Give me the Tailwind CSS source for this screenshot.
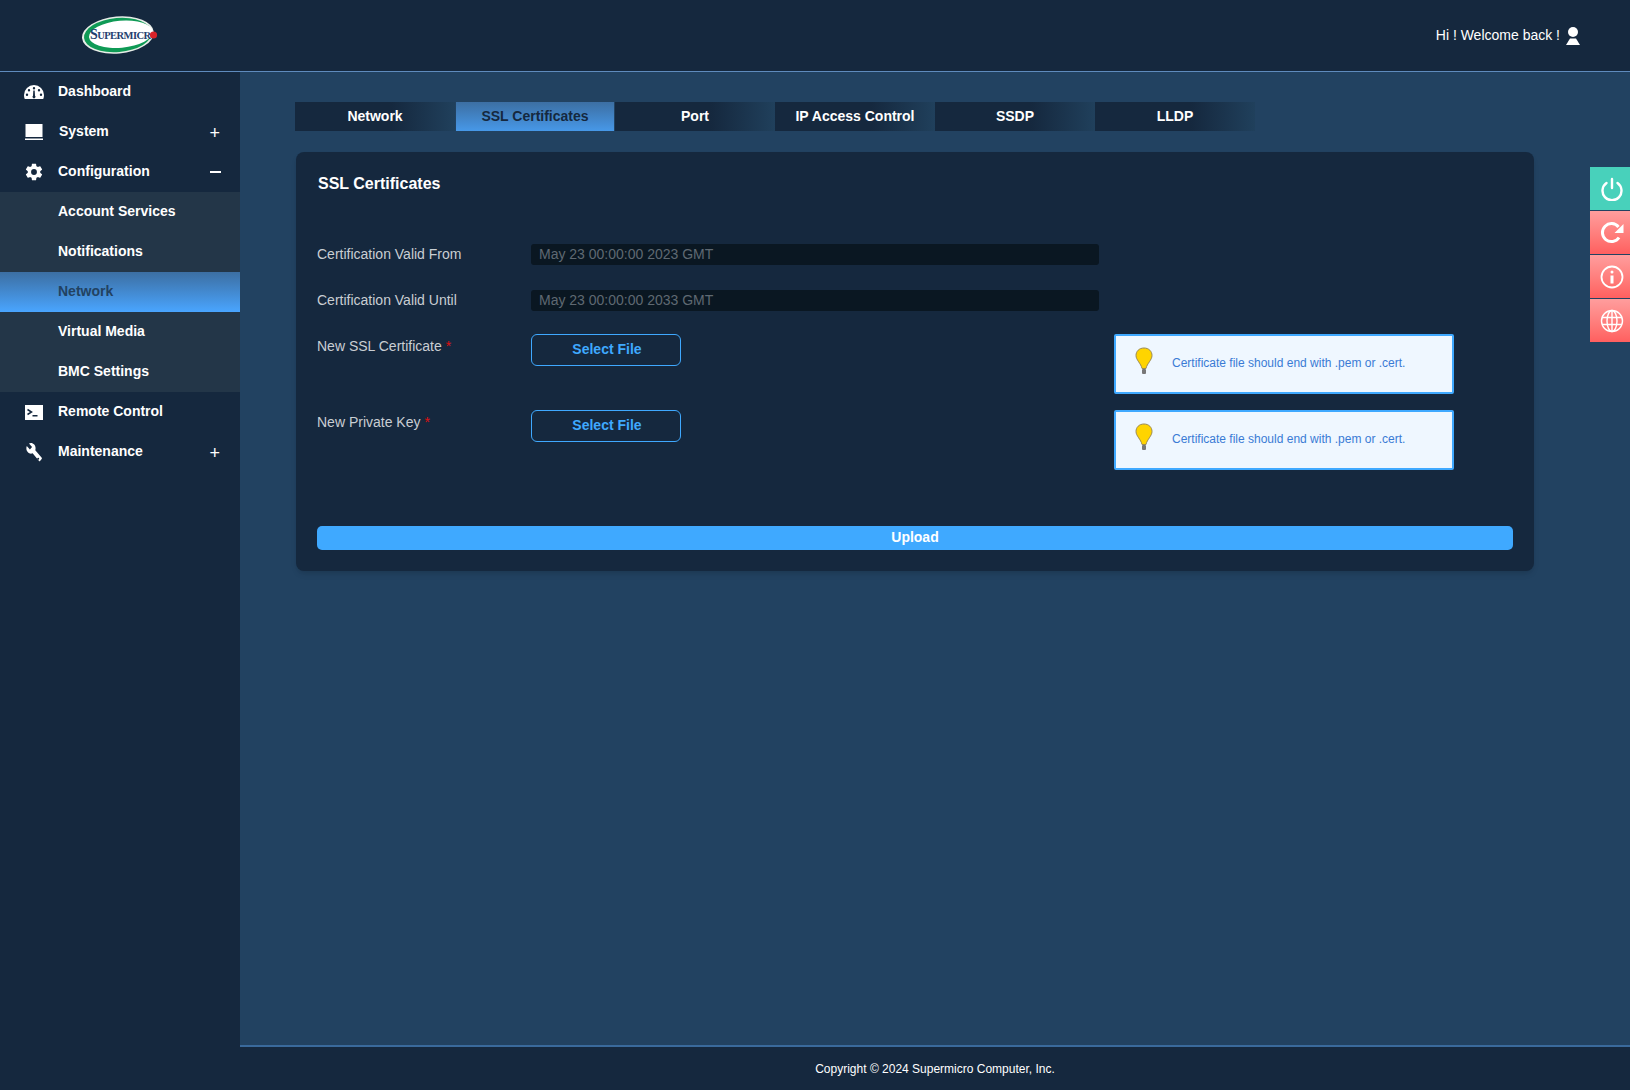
<!DOCTYPE html>
<html>

<head>
    <title>SSL Certificates</title>
    <script src="https://cdn.jsdelivr.net/npm/@tailwindcss/browser@4"></script>
</head>

<body class="h-[1090px] w-[1630px] overflow-hidden bg-[#224261] font-['Liberation_Sans',Arial,sans-serif] text-white">
    <header class="flex h-[72px] items-center justify-between border-b border-[#5f8bbd] bg-[#15283e] pr-[50px]">
        <svg class="ml-[80px] mt-[1px] h-[42px] w-[80px]" viewBox="0 0 80 42">
            <g transform="rotate(-5 38 21)">
                <ellipse cx="38" cy="20" rx="36" ry="18.500" fill="#e8eee8"></ellipse>
                <ellipse cx="38" cy="20" rx="34" ry="17" fill="#0f9a55"></ellipse>
                <ellipse cx="41" cy="19.500" rx="32" ry="13.500" fill="#ffffff"></ellipse>
            </g>
            <text x="10" y="24" font-family="Liberation Serif" font-size="14" font-weight="bold" fill="#24406f" textLength="61">S<tspan font-size="10.500">UPERMICR</tspan></text>
            <circle cx="73.500" cy="20" r="3.600" fill="#d8232a"></circle>
        </svg>
        <div class="flex items-center text-sm">
            <span class="mb-[2px]">Hi ! Welcome back !</span>
            <svg class="ml-[6px] h-[18px] w-[14px]" viewBox="0 0 14 18" fill="#ffffff">
                <circle cx="7" cy="5" r="5"></circle>
                <path d="M4 11.500h6L14 18H0z"></path>
            </svg>
        </div>
    </header>

    <div class="flex h-[1018px]">
        <aside class="w-[240px] shrink-0 bg-[#15283e] text-sm font-bold">
            <a class="flex h-10 items-center pl-6">
                <svg class="mr-[14px] h-5 w-5" viewBox="0 0 20 20" fill="#ffffff">
                    <path fill-rule="evenodd" d="M10 3a10 10 0 0 0-10 10c0 1.500.3 3 .8 4h18.400c.5-1 .8-2.500.8-4A10 10 0 0 0 10 3zM10 5a1.200 1.200 0 1 1 0 2.400A1.200 1.200 0 0 1 10 5zM5 7a1.200 1.200 0 1 1 0 2.400A1.200 1.200 0 0 1 5 7zM15 7a1.200 1.200 0 1 1 0 2.400A1.200 1.200 0 0 1 15 7zM3 11.500a1.200 1.200 0 1 1 0 2.400 1.200 1.200 0 0 1 0-2.400zM17 11.500a1.200 1.200 0 1 1 0 2.400 1.200 1.200 0 0 1 0-2.400zM9.300 8.500h1.400l.3 5.200a1.500 1.500 0 1 1-2 0z"></path>
                </svg>
                <span class="mb-[2px]">Dashboard</span>
            </a>
            <a class="flex h-10 items-center pl-6">
                <svg class="mr-[15px] h-5 w-5" viewBox="0 0 20 20" fill="#ffffff">
                    <rect x="1.500" y="2" width="17" height="13"></rect>
                    <rect x="1" y="16.500" width="18" height="1.500"></rect>
                </svg>
                <span class="mb-[2px]">System</span>
                <span class="ml-auto mr-5 mt-[2px] text-lg font-normal leading-none">+</span>
            </a>
            <a class="flex h-10 items-center pl-6">
                <svg class="mr-[14px] h-5 w-5" viewBox="0 0 24 24" fill="#ffffff">
                    <path d="M12 15.500A3.500 3.500 0 1 1 12 8.500a3.500 3.500 0 0 1 0 7zm7.430-2.530c.04-.32.07-.64.07-.97s-.03-.66-.07-1l2.110-1.630c.19-.15.24-.42.12-.64l-2-3.460c-.12-.22-.39-.31-.61-.22l-2.490 1c-.52-.39-1.060-.73-1.690-.98l-.37-2.650A.506.506 0 0 0 14 2h-4c-.25 0-.46.180-.5.420l-.37 2.650c-.63.250-1.170.590-1.690.980l-2.490-1c-.22-.090-.49 0-.61.220l-2 3.460c-.13.220-.07.490.12.640L4.570 11c-.04.340-.07.670-.07 1s.03.650.07.970l-2.110 1.660c-.19.150-.25.420-.12.640l2 3.460c.12.220.39.300.61.220l2.490-1.010c.52.400 1.060.740 1.690.990l.37 2.650c.04.240.25.420.5.420h4c.25 0 .46-.180.5-.420l.37-2.650c.63-.260 1.170-.590 1.690-.990l2.490 1.010c.22.080.49 0 .61-.220l2-3.460c.12-.220.07-.490-.12-.640l-2.110-1.660z"></path>
                </svg>
                <span class="mb-[2px]">Configuration</span>
                <span class="ml-auto mr-[19px] h-[1.500px] w-[11px] bg-white"></span>
            </a>
            <div class="bg-[#233648]">
                <a class="flex h-10 items-center pb-[2px] pl-[58px]">Account Services</a>
                <a class="flex h-10 items-center pb-[2px] pl-[58px]">Notifications</a>
                <a class="flex h-10 items-center bg-gradient-to-b from-[#3c6fa3] to-[#49a5ff] pb-[2px] pl-[58px] text-[#224261]">Network</a>
                <a class="flex h-10 items-center pb-[2px] pl-[58px]">Virtual Media</a>
                <a class="flex h-10 items-center pb-[2px] pl-[58px]">BMC Settings</a>
            </div>
            <a class="flex h-10 items-center pl-6">
                <svg class="mr-[14px] h-5 w-5" viewBox="0 0 20 20">
                    <rect x="1" y="3" width="18" height="15" fill="#ffffff"></rect>
                    <path d="M3.500 7.500l4 2.500-4 2.500" fill="none" stroke="#15283e" stroke-width="1.500"></path>
                    <rect x="8.500" y="13" width="5" height="1.500" fill="#15283e"></rect>
                </svg>
                <span class="mb-[2px]">Remote Control</span>
            </a>
            <a class="flex h-10 items-center pl-6">
                <svg class="mr-[14px] h-5 w-5" viewBox="0 0 24 24">
                    <path d="M22.700 19l-9.100-9.100c.9-2.300.4-5-1.500-6.900-2-2-5-2.400-7.400-1.300L9 6 6 9 1.600 4.700C.4 7.100.9 10.100 2.900 12.100c1.900 1.900 4.600 2.400 6.900 1.500l9.100 9.100c.4.400 1 .4 1.400 0l2.300-2.300c.5-.4.5-1.100.1-1.400z" fill="#ffffff" transform="translate(2 0) scale(0.85 1)"></path>
                    <circle cx="17" cy="20" r="1.200" fill="#15283e"></circle>
                </svg>
                <span class="mb-[2px]">Maintenance</span>
                <span class="ml-auto mr-5 mt-[2px] text-lg font-normal leading-none">+</span>
            </a>
        </aside>

        <div class="flex min-w-0 flex-1 flex-col">
            <main class="flex-1 pl-[55px] pr-[96px] pt-[30px]">
                <nav class="flex h-[29px] text-sm font-bold">
                    <a class="flex w-[160px] items-center justify-center bg-gradient-to-r from-[#15283e] from-60% to-[#20405c] pb-[2px]">Network</a>
                    <a class="mx-px flex w-[158px] items-center justify-center bg-gradient-to-b from-[#3c6fa3] to-[#4798e8] pb-[2px] text-[#15283e]">SSL Certificates</a>
                    <a class="flex w-[160px] items-center justify-center bg-gradient-to-r from-[#15283e] from-60% to-[#20405c] pb-[2px]">Port</a>
                    <a class="flex w-[160px] items-center justify-center bg-gradient-to-r from-[#15283e] from-60% to-[#20405c] pb-[2px]">IP Access Control</a>
                    <a class="flex w-[160px] items-center justify-center bg-gradient-to-r from-[#15283e] from-60% to-[#20405c] pb-[2px]">SSDP</a>
                    <a class="flex w-[160px] items-center justify-center bg-gradient-to-r from-[#15283e] from-60% to-[#20405c] pb-[2px]">LLDP</a>
                </nav>

                <section class="ml-px mt-[21px] h-[419px] rounded-lg bg-[#15283e] px-[21px] pt-[21px] shadow-md">
                    <h2 class="ml-px text-base font-bold leading-[21px]">SSL Certificates</h2>

                    <div class="mt-[50px] flex h-[21px] items-center text-sm text-[#c9ced3]">
                        <label class="mb-[2px] w-[214px]">Certification Valid From</label>
                        <div class="flex h-[21px] w-[568px] items-center rounded-[3px] bg-[#0a1722] pb-[2px] pl-2 text-[#5f6972]">May 23 00:00:00 2023 GMT</div>
                    </div>
                    <div class="mt-[25px] flex h-[21px] items-center text-sm text-[#c9ced3]">
                        <label class="mb-[2px] w-[214px]">Certification Valid Until</label>
                        <div class="flex h-[21px] w-[568px] items-center rounded-[3px] bg-[#0a1722] pb-[2px] pl-2 text-[#5f6972]">May 23 00:00:00 2033 GMT</div>
                    </div>

                    <div class="mt-[23px] flex h-[60px] items-start text-sm text-[#c9ced3]">
                        <label class="w-[214px] leading-[24px]">New SSL Certificate <span class="text-[#e01010]">*</span></label>
                        <button class="h-8 w-[150px] rounded-[6px] border border-[#3fa9ff] pb-[2px] pl-[2px] font-bold text-[#3fa9ff]">Select File</button>
                        <div class="ml-[433px] flex h-[60px] w-[340px] items-center rounded-[2px] border-2 border-[#3fa9ff] bg-[#eff7ff] pl-[18px] text-xs text-[#3a7bd5]">
                            <svg class="mb-[6px] mr-[18px] h-[29px] w-[20px]" viewBox="0 0 20 29">
                                <path d="M10 1C5 1 2 4.500 2 8.500c0 4.500 5 8 6 13h4c1-5 6-8.500 6-13C18 4.500 15 1 10 1z" fill="#ffd400" stroke="#9a8a55"></path>
                                <rect x="8" y="22" width="4" height="5" rx="1" fill="#777777"></rect>
                            </svg>
                            <span class="mb-[2px]">Certificate file should end with .pem or .cert.</span>
                        </div>
                    </div>
                    <div class="mt-4 flex h-[60px] items-start text-sm text-[#c9ced3]">
                        <label class="w-[214px] leading-[24px]">New Private Key <span class="text-[#e01010]">*</span></label>
                        <button class="h-8 w-[150px] rounded-[6px] border border-[#3fa9ff] pb-[2px] pl-[2px] font-bold text-[#3fa9ff]">Select File</button>
                        <div class="ml-[433px] flex h-[60px] w-[340px] items-center rounded-[2px] border-2 border-[#3fa9ff] bg-[#eff7ff] pl-[18px] text-xs text-[#3a7bd5]">
                            <svg class="mb-[6px] mr-[18px] h-[29px] w-[20px]" viewBox="0 0 20 29">
                                <path d="M10 1C5 1 2 4.500 2 8.500c0 4.500 5 8 6 13h4c1-5 6-8.500 6-13C18 4.500 15 1 10 1z" fill="#ffd400" stroke="#9a8a55"></path>
                                <rect x="8" y="22" width="4" height="5" rx="1" fill="#777777"></rect>
                            </svg>
                            <span class="mb-[2px]">Certificate file should end with .pem or .cert.</span>
                        </div>
                    </div>

                    <button class="mt-[56px] h-6 w-full rounded-[5px] bg-[#3fa9ff] pb-[2px] text-sm font-bold">Upload</button>
                </section>
            </main>

            <footer class="flex h-[45px] items-center justify-center border-t-2 border-[#3a6a9c] bg-[#15283e] text-xs">
                Copyright © 2024 Supermicro Computer, Inc.
            </footer>
        </div>
    </div>

    <div class="absolute right-0 top-[167px] flex w-10 flex-col gap-px">
        <div class="flex h-[43px] items-center justify-center bg-[#48d1bb] pl-[3px]">
            <svg class="h-6 w-6" viewBox="0 0 24 24" fill="none" stroke="#ffffff" stroke-width="2.400" stroke-linecap="round">
                <path d="M12 2v9"></path>
                <path d="M6.500 6a9.500 9.500 0 1 0 11 0"></path>
            </svg>
        </div>
        <div class="flex h-[43px] items-center justify-center bg-gradient-to-b from-[#ff9d9d] to-[#ff5f5f] pl-[3px]">
            <svg class="h-6 w-6" viewBox="0 0 24 24" fill="none" stroke="#ffffff" stroke-width="3">
                <path d="M19 16.500A9 9 0 1 1 18.500 6"></path>
                <path d="M23.500 3v9h-9z" fill="#ffffff" stroke="none"></path>
            </svg>
        </div>
        <div class="flex h-[43px] items-center justify-center bg-gradient-to-b from-[#ff9d9d] to-[#ff5f5f] pl-[3px]">
            <svg class="h-6 w-6" viewBox="0 0 24 24" fill="none" stroke="#ffffff" stroke-width="1.800">
                <circle cx="12" cy="12" r="10.500"></circle>
                <circle cx="12" cy="7" r="1.500" fill="#ffffff" stroke="none"></circle>
                <path d="M12 10.500v8" stroke-width="3"></path>
            </svg>
        </div>
        <div class="flex h-[43px] items-center justify-center bg-gradient-to-b from-[#ff9d9d] to-[#ff5f5f] pl-[3px]">
            <svg class="h-6 w-6" viewBox="0 0 24 24" fill="none" stroke="#ffffff" stroke-width="1.400">
                <circle cx="12" cy="12" r="10.500"></circle>
                <ellipse cx="12" cy="12" rx="5" ry="10.500"></ellipse>
                <path d="M12 1.500v21M2 8.500h20M2 15.500h20"></path>
            </svg>
        </div>
    </div>
</body>

</html>
